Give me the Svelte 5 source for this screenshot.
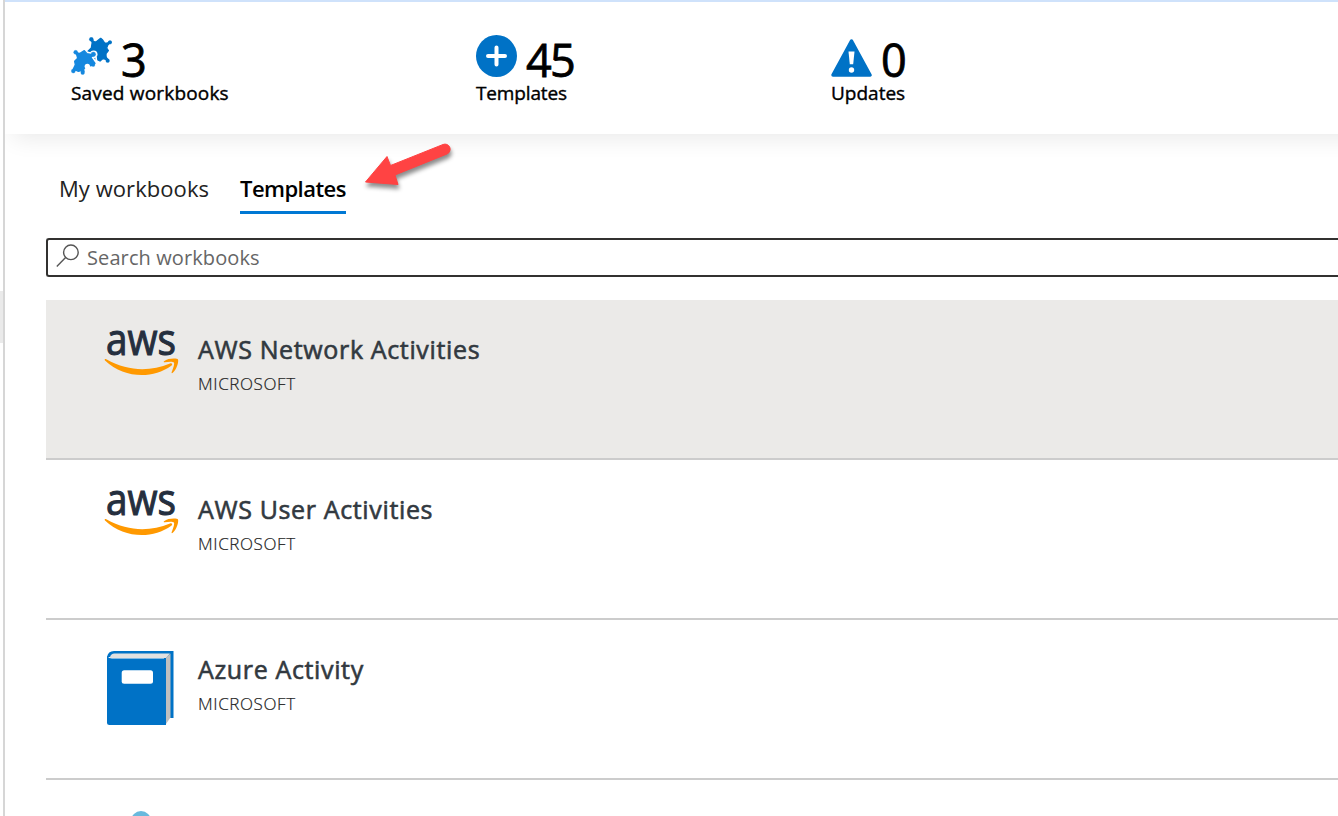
<script>
  const stats = [
    { kind: 'puzzle', count: 3, label: 'Saved workbooks' },
    { kind: 'plus', count: 45, label: 'Templates' },
    { kind: 'warning', count: 0, label: 'Updates' }
  ];
  const rows = [
    { icon: 'aws', name: 'AWS Network Activities', selected: true },
    { icon: 'aws', name: 'AWS User Activities' },
    { icon: 'book', name: 'Azure Activity' }
  ];
</script>

<div class="page">
  <div class="rail"><div class="handle"></div></div>
  <main>
    <header>
      {#each stats as s}
        <div class="stat {s.kind}">
          <div class="top">
            {#if s.kind === 'puzzle'}
              <svg width="41" height="38" viewBox="9 15 123 114">
                <g fill="#0072c6" stroke="#0072c6">
                  <path d="M73 29 84 30 98 19 104 24 110 33 121 34 116 48 121 56 114 65 114 82 104 80 96 87 82 80 74 67 60 58 70 48Z" stroke-width="4" stroke-linejoin="round" />
                  <path d="M70 23 80 36M125 31 112 42M119 85 109 72" stroke-width="8" stroke-linecap="round" />
                  <circle cx="70" cy="22" r="6" /><circle cx="126" cy="31" r="5.500" /><circle cx="119" cy="86" r="5.500" />
                </g>
                <circle cx="77" cy="67" r="11.500" fill="#fff" />
                <path d="M56 60 70 64M84 75 86 92" stroke="#fff" stroke-width="5" />
                <g fill="#1588df" stroke="#1588df">
                  <path d="M25 63 36 64 49 56 57 65 68 67 69 77 81 94 76 100 60 102 52 105 47 112 48 119 40 116 31 118 16 111 22 98 20 88 29 79Z" stroke-width="4" stroke-linejoin="round" />
                  <path d="M24 62 34 72M16 117 29 103M44 121 42 107M67 74 76 67" stroke-width="8" stroke-linecap="round" />
                  <circle cx="23" cy="61" r="6" /><circle cx="16" cy="117" r="6" /><circle cx="44" cy="122" r="5.500" /><circle cx="76" cy="67" r="7" /><circle cx="76" cy="99" r="4.500" />
                </g>
                <circle cx="58" cy="103" r="8" fill="#fff" />
              </svg>
            {:else if s.kind === 'plus'}
              <svg width="41" height="42" viewBox="0 0 41 42">
                <ellipse cx="20.5" cy="21" rx="20.5" ry="21" fill="#0072c6" />
                <path d="M20.5 12.5v17M12 21h17" stroke="#fff" stroke-width="4" stroke-linecap="round" />
              </svg>
            {:else}
              <svg width="41" height="38" viewBox="0 0 41 38">
                <path d="M20.5 2 39 36H2Z" fill="#0072c6" stroke="#0072c6" stroke-width="3.5" stroke-linejoin="round" />
                <path d="M17.5 12.5h6l-1.3 12.8h-3.4Z" fill="#fff" /><circle cx="20.5" cy="31" r="2.7" fill="#fff" />
              </svg>
            {/if}
            <span class="count">{s.count}</span>
          </div>
          <span class="label">{s.label}</span>
        </div>
      {/each}
    </header>

    <section>
      <nav>
        <span class="tab">My workbooks</span>
        <span class="tab active">Templates</span>
      </nav>
      <div class="search">
        <svg width="24" height="24" viewBox="0 0 24 24" fill="none" stroke="#555" stroke-width="1.4">
          <circle cx="14.9" cy="8.3" r="7.3" /><path d="M9.6 13.4.8 22.4" />
        </svg>
        <span>Search workbooks</span>
      </div>
      <div class="list">
        {#each rows as r}
          <article class:selected={r.selected}>
            {#if r.icon === 'aws'}
              <svg class="logo" width="76" height="100" viewBox="0 -20 76 100">
                <text class="aws" x="2" y="27" textLength="70" lengthAdjust="spacingAndGlyphs">aws</text>
                <path d="M1 32.5C.2 31.500 1 30.600 2.300 31.300 25 43.800 46 43.500 66 35.500 68 34.800 69 36.600 67.300 37.800 48 51.500 20 50.300 1 32.500Z" fill="#ff9900" />
                <path d="M60 33.200C64 30 73.500 30 74 31.600 74.800 33.500 73 41.500 68.800 44.800 67.800 45.500 67.300 45 67.700 44.100 69.100 40.800 70.800 35.800 69.900 34.600 68.800 33.300 64 33.900 60.800 34.200 59.600 34.300 59.400 33.800 60 33.200Z" fill="#ff9900" />
              </svg>
            {:else}
              <svg class="logo" width="76" height="100" viewBox="0 -20 76 100">
                <path d="M3 9Q4 3 10 3H69.500V70H60V10Z" fill="#0072c6" />
                <path d="M6 10Q6 6 10 5.500H66L62 10Z" fill="#e1e1e1" />
                <path d="M62 9.500 66.500 5.500V69.500L62 76Z" fill="#bfbfbf" />
                <path d="M3 8Q5 10.500 8 10.500H62V77H5.500Q3 77 3 74.500Z" fill="#0072c6" />
                <rect x="17.700" y="22.300" width="31.300" height="13.500" rx="2.500" fill="#fff" />
              </svg>
            {/if}
            <div class="info">
              <h3>{r.name}</h3>
              <p>MICROSOFT</p>
            </div>
          </article>
        {/each}
        <article class="partial"><span class="drop"></span></article>
      </div>
    </section>
  </main>
  <svg class="arrow" width="110" height="64" viewBox="0 0 110 64">
    <path d="M9.500 46 31 20.500 34.500 29.500 87 8.500A5 5 0 0 1 91 18L39 39 42 48.500Z" fill="#ff4343" stroke="#ff4343" stroke-linejoin="round" />
  </svg>
</div>

<style>
  :global(body) { margin: 0; background: #fff; overflow: hidden; }
  .page { display: flex; width: 1338px; height: 816px; overflow: hidden; position: relative; font-family: "Open Sans", "Noto Sans", sans-serif; color: #000; }
  .page svg { display: block; flex: none; }
  .rail { width: 3px; flex: none; border-right: 2px solid #d6d6d6; padding-top: 291px; box-sizing: content-box; height: 525px; }
  .handle { height: 52px; background: #eaeaea; }
  main { flex: 1; min-width: 0; height: 816px; overflow: hidden; }
  header { height: 134px; margin-right: -40px; box-sizing: border-box; border-top: 2px solid #cfe2fb; background: #fff; box-shadow: 8px 4px 22px rgba(0,0,0,.09); display: flex; padding-left: 66px; }
  .stat { padding-top: 33px; white-space: nowrap; }
  .stat.puzzle { width: 405px; }
  .stat.plus { width: 355px; }
  .top { display: flex; height: 42px; align-items: center; gap: 9px; }
  .puzzle .top svg { margin-top: -1px; }
  .warning .top svg { margin-top: 4px; }
  .count { font-size: 45px; line-height: 42px; letter-spacing: -1.8px; padding-top: 8px; -webkit-text-stroke: .8px #000; }
  .label { display: block; font-size: 19px; line-height: 26px; margin-top: 3px; -webkit-text-stroke: .4px #000; }
  .puzzle .label { letter-spacing: .18px; }
  .plus .label { letter-spacing: -.15px; }
  section { padding-left: 41px; }
  nav { display: flex; gap: 31px; padding: 38px 0 0 13px; height: 66px; box-sizing: content-box; }
  .tab { font-size: 22px; line-height: 32px; height: 39px; white-space: nowrap; letter-spacing: .06px; }
  .tab:first-child { color: #222; }
  .tab.active { font-weight: 600; letter-spacing: -.56px; border-bottom: 3px solid #0078d4; }
  .search { height: 39px; box-sizing: border-box; border: 2px solid #323130; border-right: 0; border-radius: 3px 0 0 3px; display: flex; padding: 4px 0 0 8px; gap: 7px; color: #666; font-size: 20px; line-height: 28px; letter-spacing: .1px; }
  .list { margin-top: 23px; }
  article { height: 160px; box-sizing: border-box; border-bottom: 2px solid #ccc; padding: 28px 0 0 58px; display: flex; gap: 18px; }
  .selected { background: #ebeae8; }
  .logo { margin-top: -20px; }
  .aws { font: 400 44px "Open Sans", sans-serif; fill: #252f3e; stroke: #252f3e; stroke-width: 1.1px; }
  h3 { margin: 3px 0 0; font-size: 25px; line-height: 36px; font-weight: 400; letter-spacing: .64px; color: #323940; -webkit-text-stroke: .6px #323940; white-space: nowrap; }
  p { margin: 5px 0 0; font-size: 17px; line-height: 24px; color: #222; font-weight: 300; letter-spacing: .6px; -webkit-text-stroke: .2px #222; }
  .partial { border: 0; padding-left: 85px; padding-top: 31px; }
  .drop { width: 20px; height: 20px; border-radius: 50%; background: #69b9dd; }
  .arrow { position: absolute; left: 356px; top: 136px; filter: drop-shadow(1px 4px 2px rgba(0,0,0,.45)); }
</style>
